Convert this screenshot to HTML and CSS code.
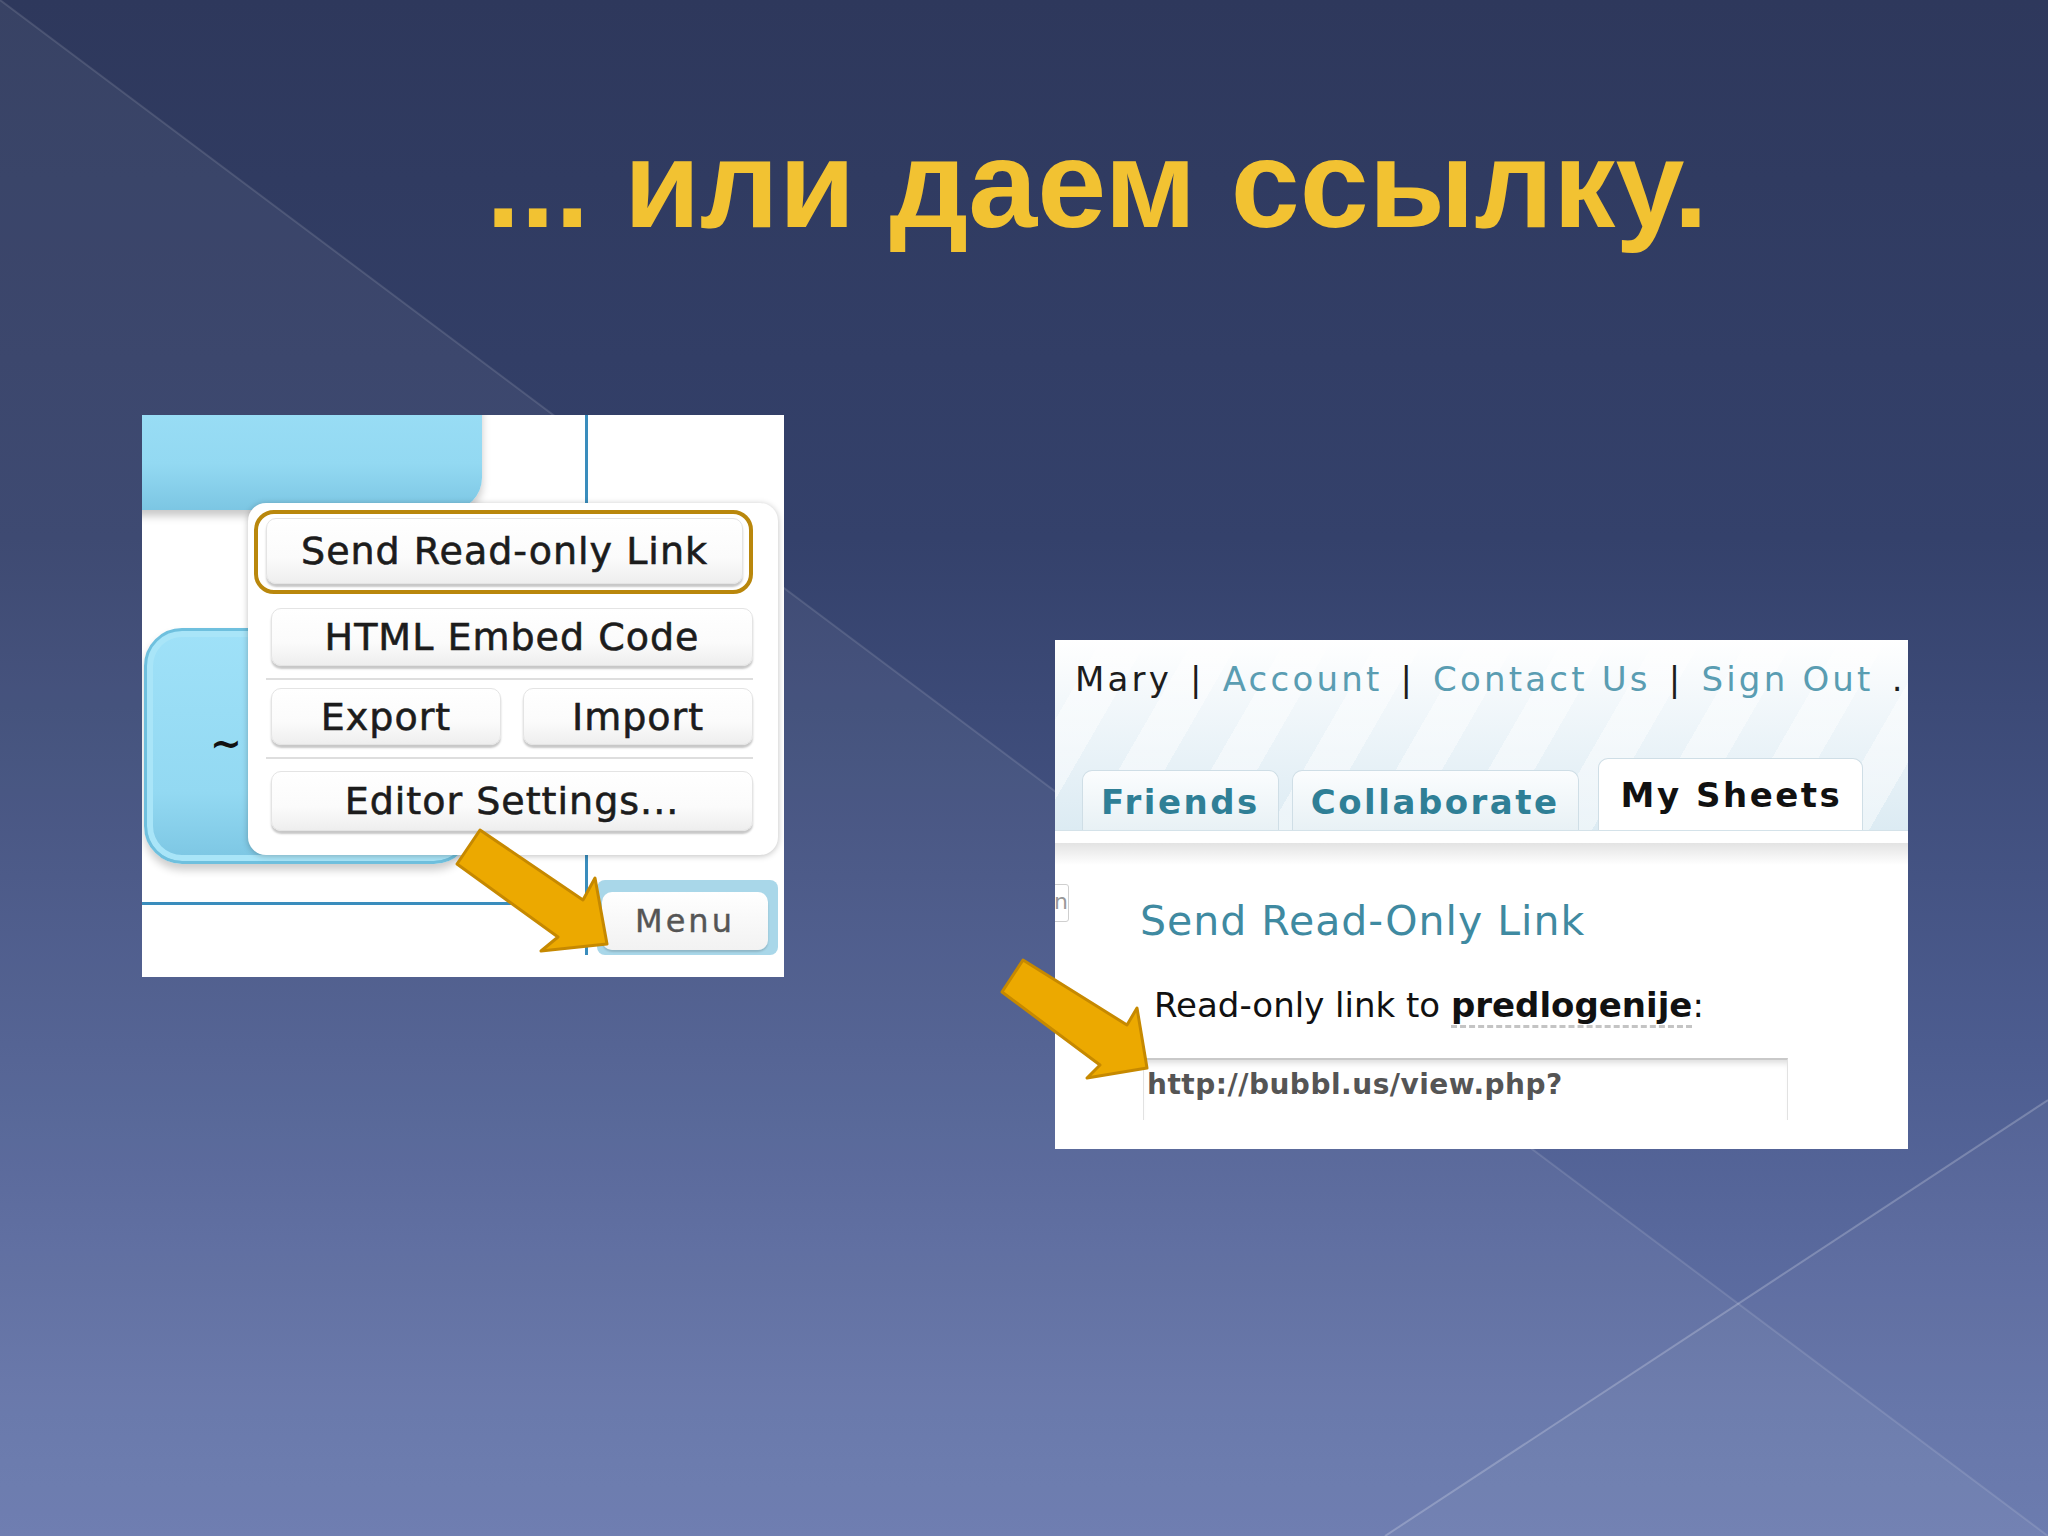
FILE: index.html
```html
<!DOCTYPE html>
<html lang="ru">
<head>
  <meta charset="UTF-8" />
  <title>... или даем ссылку.</title>
  <link rel="stylesheet" href="styles.css">
</head>
<body>
<div class="slide">
  <!-- background facets -->
  <svg class="bg-facets" viewBox="0 0 2048 1536" preserveAspectRatio="none">
    <polygon points="0,0 2048,1536 0,1536" fill="#ffffff" fill-opacity="0.05"/>
    <polygon points="2048,1100 2048,1536 1385,1536" fill="#ffffff" fill-opacity="0.03"/>
    <line x1="0" y1="0" x2="2048" y2="1536" stroke="#ffffff" stroke-opacity="0.12" stroke-width="2"/>
    <line x1="2048" y1="1100" x2="1385" y2="1536" stroke="#ffffff" stroke-opacity="0.22" stroke-width="2"/>
  </svg>

  <h1 class="title">... или даем ссылку.</h1>

  <div class="shots">
    <!-- bubbl.us editor menu -->
    <div class="shot shot-menu">
      <div class="node node-top"></div>
      <div class="node node-mid"></div>
      <span class="tilde">~</span>
      <div class="vline"></div>
      <div class="hline"></div>

      <div class="popup">
        <div class="opt-hl">
          <div class="opt">Send Read-only Link</div>
        </div>
        <div class="opt opt-wide">HTML Embed Code</div>
        <div class="sep"></div>
        <div class="opt-row">
          <div class="opt">Export</div>
          <div class="opt">Import</div>
        </div>
        <div class="sep"></div>
        <div class="opt opt-wide opt-last">Editor Settings...</div>
      </div>

      <div class="menu-btn">
        <div class="menu-inner">Menu</div>
      </div>
    </div>

    <!-- bubbl.us send link page -->
    <div class="shot shot-link">
      <div class="topbar">
        <div class="userlinks">
          <span class="user">Mary</span>
          <span class="bar">|</span>
          <span class="link">Account</span>
          <span class="bar">|</span>
          <span class="link">Contact Us</span>
          <span class="bar">|</span>
          <span class="link">Sign Out</span>
          <span class="bar">.</span>
        </div>
        <div class="tabs">
          <div class="tab">Friends</div>
          <div class="tab">Collaborate</div>
          <div class="tab active">My Sheets</div>
        </div>
      </div>
      <div class="content">
        <div class="shade"></div>
        <div class="stub">n</div>
        <h2 class="send-title">Send Read-Only Link</h2>
        <p class="send-label">Read-only link to <b>predlogenije</b>:</p>
        <div class="url-box">http://bubbl.us/view.php?</div>
      </div>
    </div>
  </div>

  <!-- pointer arrows -->
  <svg class="arrows" viewBox="0 0 2048 1536">
    <polygon points="480,830 583,900 595,878 607,944 541,951 558,937 457,864"/>
    <polygon points="1023,960 1127,1025 1137,1008 1147,1068 1087,1078 1100,1065 1002,992"/>
  </svg>
</div>
</body>
</html>
```

FILE: styles.css
```css
html, body {
  margin: 0;
  padding: 0;
}

body {
  font-family: "Liberation Sans", Arial, sans-serif;
}

.slide {
  position: relative;
  width: 2048px;
  height: 1536px;
  overflow: hidden;
  background: linear-gradient(180deg, #2e385c 0%, #34416b 35%, #4c5c8f 68%, #6373a8 92%, #6878ad 100%);
}

.bg-facets,
.arrows {
  position: absolute;
  left: 0;
  top: 0;
  width: 2048px;
  height: 1536px;
  pointer-events: none;
}

.arrows polygon {
  fill: #eca900;
  stroke: #c68900;
  stroke-width: 3;
  stroke-linejoin: round;
}

.title {
  position: relative;
  margin: 0;
  padding: 122px 0 0 146px;
  font-family: "Liberation Sans", Arial, sans-serif;
  font-weight: bold;
  font-size: 124px;
  line-height: 125px;
  text-align: center;
  color: #f2c232;
}

.shots {
  position: relative;
  display: flex;
  align-items: flex-start;
  gap: 271px;
  padding-left: 142px;
  margin-top: 168px;
}

.shot {
  position: relative;
  background: #fff;
  overflow: hidden;
  flex-shrink: 0;
}

/* ---------- left screenshot ---------- */
.shot-menu {
  width: 642px;
  height: 562px;
  font-family: "DejaVu Sans", Verdana, sans-serif;
}

.node {
  position: absolute;
  background: linear-gradient(180deg, #9fe1f8 0%, #93d9f2 70%, #7cc6e3 100%);
  box-shadow: 0 6px 8px rgba(0, 0, 0, 0.22);
}

.node-top {
  left: -40px;
  top: -60px;
  width: 380px;
  height: 155px;
  border-radius: 32px;
}

.node-mid {
  left: 2px;
  top: 213px;
  width: 328px;
  height: 236px;
  border-radius: 38px;
  border: 3px solid #6fc0de;
  box-sizing: border-box;
  box-shadow: inset 0 0 0 6px #a9e5f8, 0 6px 8px rgba(0, 0, 0, 0.2);
}

.tilde {
  position: absolute;
  left: 68px;
  top: 306px;
  font-size: 38px;
  font-weight: bold;
  color: #111;
}

.vline {
  position: absolute;
  left: 443px;
  top: 0;
  width: 3px;
  height: 540px;
  background: #3a8dbd;
}

.hline {
  position: absolute;
  left: 0;
  top: 487px;
  width: 446px;
  height: 3px;
  background: #3a8dbd;
}

.popup {
  position: absolute;
  left: 106px;
  top: 88px;
  width: 530px;
  height: 352px;
  box-sizing: border-box;
  padding: 7px 25px 0 6px;
  background: #fff;
  border-radius: 18px;
  box-shadow: 0 1px 6px rgba(0, 0, 0, 0.25);
  display: flex;
  flex-direction: column;
}

.opt-hl {
  height: 84px;
  box-sizing: border-box;
  border: 4px solid #b9870c;
  border-radius: 20px;
  padding: 4px 6px 6px 8px;
  display: flex;
}

.opt {
  flex: 1;
  display: flex;
  align-items: center;
  justify-content: center;
  background: linear-gradient(180deg, #ffffff 0%, #fbfbfb 60%, #eeeeee 100%);
  border: 1px solid #e4e4e4;
  border-radius: 10px;
  box-shadow: 0 3px 2px rgba(0, 0, 0, 0.22);
  font-size: 38px;
  letter-spacing: 1px;
  color: #1c1c1c;
  -webkit-text-stroke: 0.6px #1c1c1c;
}

.opt-wide {
  flex: none;
  height: 56px;
  margin: 14px 0 0 17px;
}

.opt-last {
  height: 58px;
  margin-top: 12px;
}

.sep {
  height: 2px;
  margin: 12px 0 0 12px;
  background: #dedede;
}

.opt-row {
  display: flex;
  gap: 22px;
  height: 57px;
  margin: 8px 0 0 17px;
}

.menu-btn {
  position: absolute;
  left: 455px;
  top: 465px;
  width: 181px;
  height: 75px;
  box-sizing: border-box;
  padding: 12px 10px 5px 5px;
  background: #a9d7e9;
  border-radius: 8px;
  display: flex;
}

.menu-inner {
  flex: 1;
  display: flex;
  align-items: center;
  justify-content: center;
  background: linear-gradient(180deg, #ffffff, #f2f2f2);
  border-radius: 10px;
  box-shadow: 0 2px 2px rgba(0, 0, 0, 0.15);
  font-size: 32px;
  letter-spacing: 3px;
  color: #555;
  -webkit-text-stroke: 0.4px #555;
}

/* ---------- right screenshot ---------- */
.shot-link {
  width: 853px;
  height: 509px;
  margin-top: 225px;
  display: flex;
  flex-direction: column;
  font-family: "DejaVu Sans", Verdana, sans-serif;
}

.topbar {
  height: 190px;
  display: flex;
  flex-direction: column;
  justify-content: space-between;
  border-bottom: 1px solid #d4e2e9;
  background:
    repeating-linear-gradient(120deg, rgba(255, 255, 255, 0) 0 40px, rgba(255, 255, 255, 0.45) 40px 80px),
    linear-gradient(180deg, #ffffff 0%, #f3f8fb 30%, #dcebf3 100%);
}

.userlinks {
  display: flex;
  gap: 18px;
  padding: 19px 0 0 20px;
  font-size: 34px;
  line-height: 40px;
  letter-spacing: 3.2px;
  white-space: nowrap;
}

.user,
.bar {
  color: #1d1d1d;
}

.link {
  color: #5a9db2;
}

.tabs {
  display: flex;
  align-items: flex-end;
  gap: 13px;
  padding-left: 27px;
}

.tab {
  height: 60px;
  padding: 3px 18px 0;
  box-sizing: border-box;
  border: 1px solid #cfdee6;
  border-bottom: none;
  border-radius: 10px 10px 0 0;
  background: linear-gradient(180deg, #fbfdfe, #e8f1f5);
  font-weight: bold;
  font-size: 34px;
  line-height: 57px;
  letter-spacing: 2.5px;
  color: #2f7f96;
}

.tab.active {
  height: 72px;
  margin-left: 6px;
  padding: 0 20px 0 22px;
  line-height: 72px;
  background: #fff;
  color: #111;
}

.content {
  position: relative;
  flex: 1;
}

.shade {
  height: 22px;
  margin-top: 12px;
  background: linear-gradient(180deg, #e3e3e3, #ffffff);
}

.stub {
  position: absolute;
  left: -10px;
  top: 53px;
  width: 24px;
  height: 38px;
  box-sizing: border-box;
  border: 1px solid #cfcfcf;
  border-radius: 3px;
  font-size: 22px;
  line-height: 34px;
  text-align: right;
  color: #999;
}

.send-title {
  margin: 31px 0 0 85px;
  font-weight: normal;
  font-size: 41px;
  line-height: 50px;
  letter-spacing: 1px;
  color: #3f8aa1;
}

.send-label {
  margin: 39px 0 0 99px;
  font-size: 34px;
  line-height: 40px;
  color: #111;
}

.send-label b {
  border-bottom: 3px dashed #c4c4c4;
}

.url-box {
  width: 645px;
  height: 62px;
  margin: 33px 0 0 88px;
  box-sizing: border-box;
  padding: 8px 0 0 3px;
  border-top: 2px solid #c9c9c9;
  border-left: 1px solid #e2e2e2;
  border-right: 1px solid #e2e2e2;
  box-shadow: inset 0 7px 6px -4px rgba(0, 0, 0, 0.14);
  font-weight: bold;
  font-size: 28px;
  line-height: 34px;
  letter-spacing: 0.5px;
  color: #555;
}
```
